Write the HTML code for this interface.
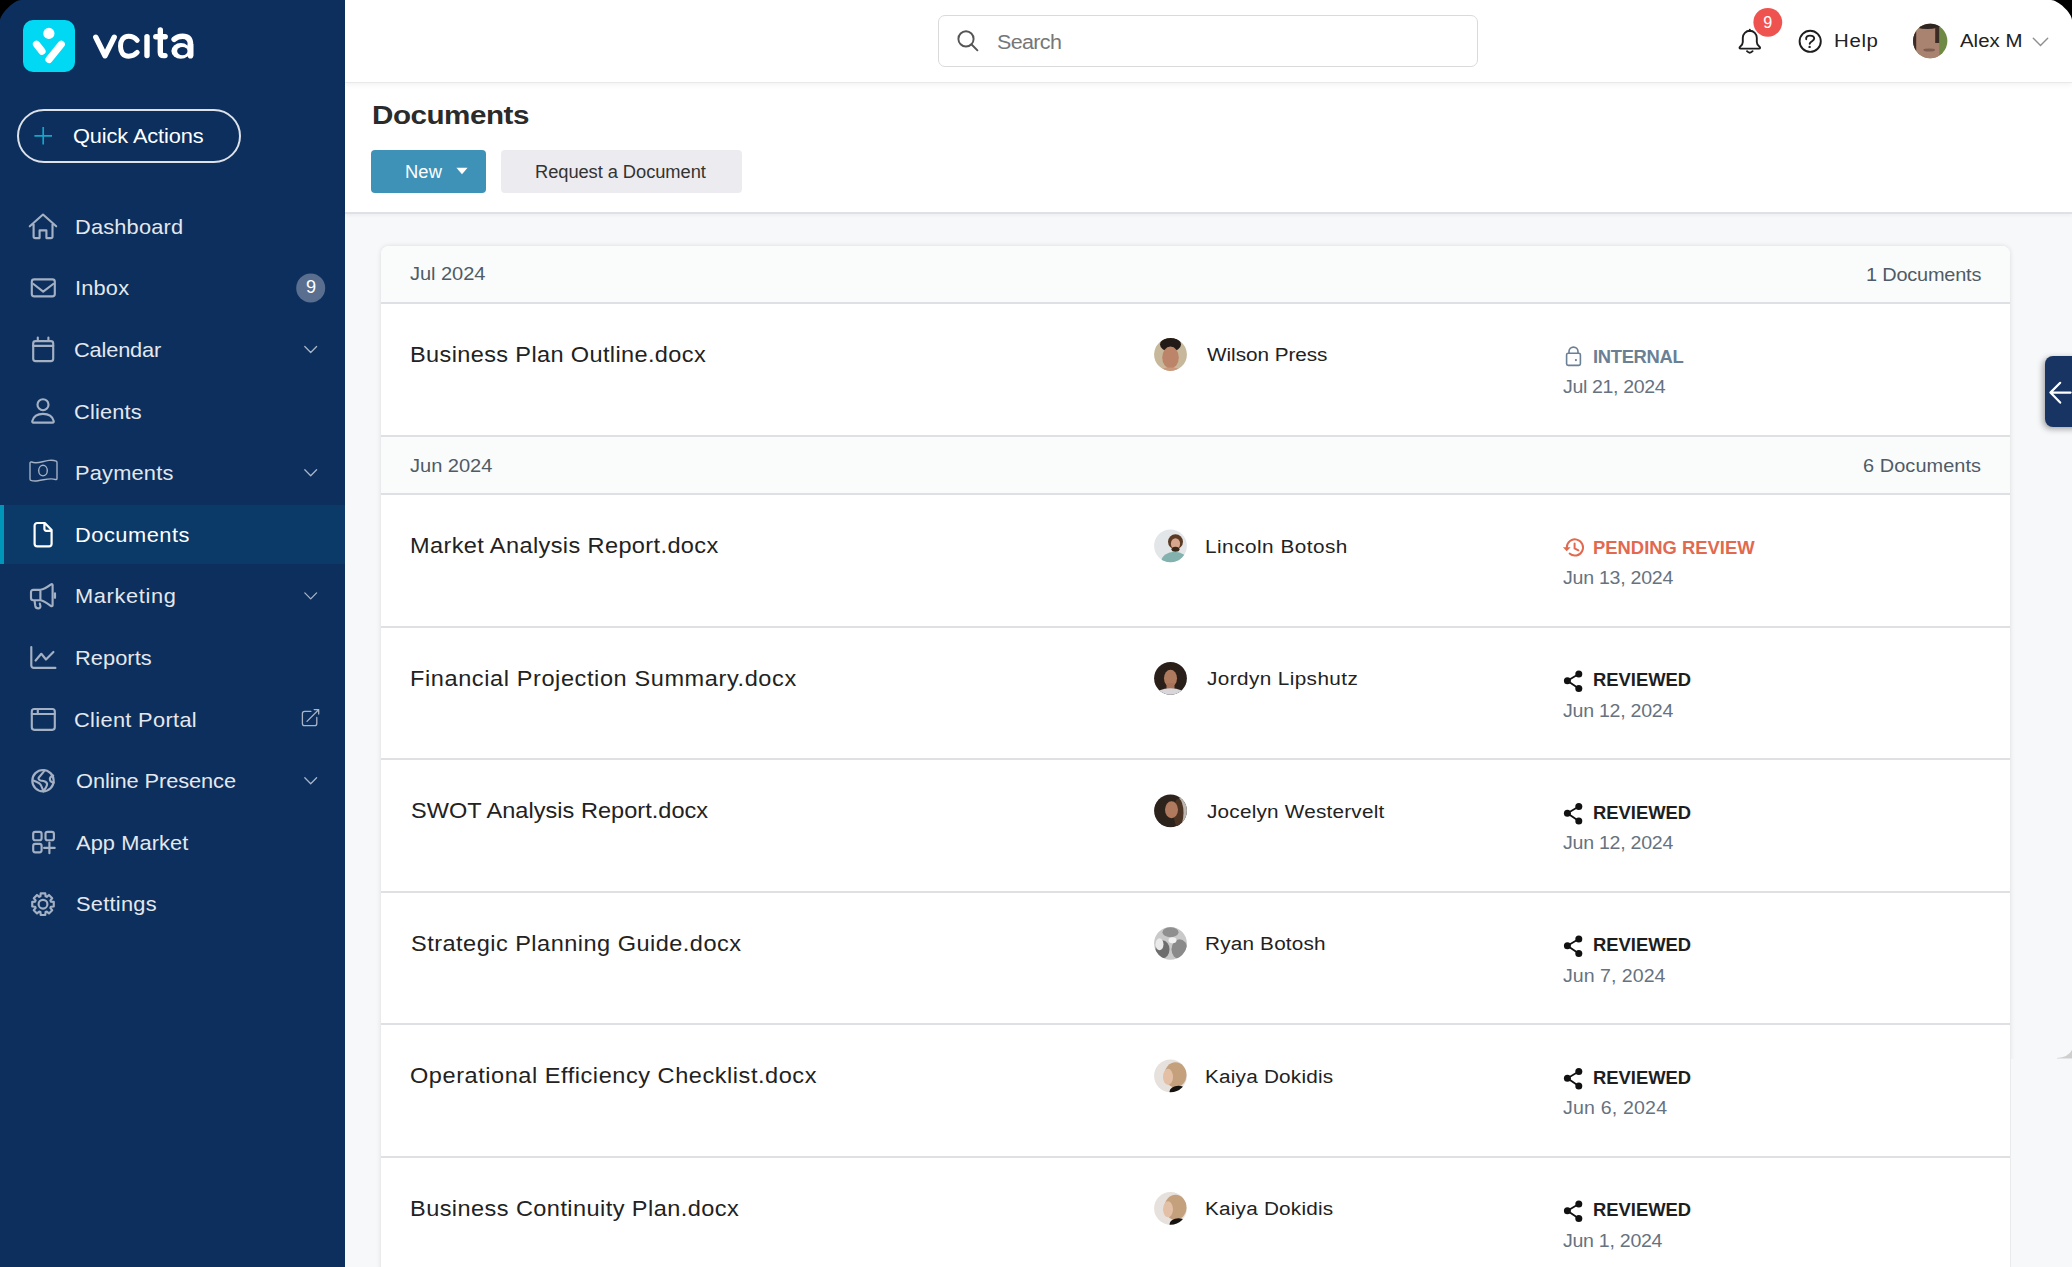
<!DOCTYPE html>
<html><head><meta charset="utf-8">
<style>
html,body{margin:0;padding:0;background:#000;}
body{width:2072px;height:1267px;overflow:hidden;position:relative;font-family:"Liberation Sans",sans-serif;}
#win{position:absolute;left:0;top:0;width:2072px;height:1267px;overflow:hidden;background:#F7F8FA;}
.abs{position:absolute;}
.t{position:absolute;white-space:nowrap;transform-origin:0 0;font-family:"Liberation Sans",sans-serif;}
#side{left:0;top:0;width:345px;height:1267px;background:#0C2F5D;}
#active{left:0;top:505px;width:345px;height:59px;background:#0B3A68;}
#activebar{left:0;top:505px;width:4px;height:59px;background:#0096B9;}
#qa{left:17px;top:109px;width:219.5px;height:49.5px;border:2px solid #DDE1E8;border-radius:27px;}
#top{left:345px;top:0;width:1727px;height:82px;background:#fff;box-shadow:0 1px 0 #E9E9E9,0 3px 5px rgba(0,0,0,0.05);z-index:3;}
#phead{left:345px;top:82px;width:1727px;height:130px;background:#fff;box-shadow:0 2px 0 #E0E1E4,0 3px 4px rgba(0,0,0,0.06);z-index:2;}
#search{left:938px;top:15px;width:538px;height:50px;border:1.5px solid #DADADA;border-radius:7px;background:#fff;}
#btnnew{left:371px;top:150px;width:115px;height:43px;background:#3E92B7;border-radius:4px;}
#btnreq{left:501px;top:150px;width:241px;height:43px;background:#ECEBF0;border-radius:4px;}
#card{left:381px;top:246px;width:1629px;height:1100px;background:#fff;border-radius:8px 8px 0 0;box-shadow:0 0 5px rgba(0,0,0,0.12);}
.gh{position:absolute;left:381px;width:1629px;background:#FAFBFB;}
.bl{position:absolute;left:381px;width:1629px;height:2px;background:#DFE0E4;}
#tab{left:2045px;top:356px;width:40px;height:71px;background:#183462;border-radius:8px;box-shadow:-2px 2px 6px rgba(0,0,0,0.35);}
.av{position:absolute;width:33px;height:33px;border-radius:50%;overflow:hidden;}
</style></head><body><div id="win">
<div id="side" class="abs"></div>
<div id="active" class="abs"></div>
<div id="activebar" class="abs"></div>
<div id="qa" class="abs"></div>
<div id="top" class="abs"></div>
<div id="phead" class="abs"></div>
<div id="search" class="abs" style="z-index:4"></div>
<div id="btnnew" class="abs" style="z-index:4"></div>
<div id="btnreq" class="abs" style="z-index:4"></div>
<div id="card" class="abs"></div>
<div class="gh" style="top:246px;height:56px;border-radius:8px 8px 0 0"></div>
<div class="bl" style="top:302px"></div>
<div class="bl" style="top:434.5px"></div>
<div class="gh" style="top:436.5px;height:56.5px"></div>
<div class="bl" style="top:493px"></div>
<div class="bl" style="top:625.5px"></div>
<div class="bl" style="top:758px"></div>
<div class="bl" style="top:890.5px"></div>
<div class="bl" style="top:1023px"></div>
<div class="bl" style="top:1155.5px"></div>
<div id="tab" class="abs"></div>
<div class="abs" style="left:2011px;top:1059px;width:61px;height:208px;background:#F7F8FA;z-index:1"></div>
<svg class="abs" style="left:2050px;top:1044px;z-index:2" width="22" height="16"><path d="M7,14 Q18,13.5 22,6 V14.5 H7 Z" fill="#CFCFCF"/></svg>
<svg style="position:absolute;left:0;top:0;z-index:9" width="2072" height="1267" viewBox="0 0 2072 1267">
<!-- logo -->
<rect x="23" y="20" width="52" height="52" rx="10" fill="#01D8F4"/>
<circle cx="48.9" cy="33.4" r="5.6" fill="#fff"/>
<path d="M36.5,44.2 L42,51.2" stroke="#fff" stroke-width="7.2" stroke-linecap="round" fill="none"/>
<path d="M61.3,44.2 L49,59.5" stroke="#fff" stroke-width="7.2" stroke-linecap="round" fill="none"/>
<g stroke="#fff" stroke-width="5.4" stroke-linecap="round" stroke-linejoin="round" fill="none">
<path d="M95.8,37.2 L105,55.8 L114.2,37.2"/>
<path d="M137.2,40.3 C135,37.7 132,36.3 128.6,36.3 C123,36.3 120.5,40.8 120.5,46.3 C120.5,52 123,56.2 128.6,56.2 C132,56.2 135,54.9 137.2,52.4" stroke-width="5"/>
<path d="M147,36.6 V55.6"/>
<path d="M160.3,29.9 V52.2 Q160.3,55.6 163.6,55.6 H165"/>
<path d="M155.8,36.7 H165.2"/>
<path d="M174.2,39.3 Q177.5,36.2 182.5,36.2 Q190.5,36.2 190.5,44.5 V55.8" stroke-width="5.6"/>
</g>
<ellipse cx="180.8" cy="50.9" rx="9.4" ry="7.8" fill="#fff"/>
<ellipse cx="182.4" cy="51.1" rx="5.3" ry="4.1" fill="#0C2F5D"/>
<rect x="187.7" y="44" width="5.6" height="11.8" fill="#fff"/>
<!-- quick actions plus -->
<path d="M43.2,127 V144.6 M34.4,135.8 H52" stroke="#15A6C8" stroke-width="1.7" fill="none"/>
<!-- nav icons -->
<g stroke="#A4B0C3" stroke-width="2.15" fill="none" stroke-linecap="round" stroke-linejoin="round">
<path d="M29.8,226.3 L43,214.5 L56.2,226.3 M33.6,222.8 V236.4 a1.7,1.7 0 0 0 1.7,1.7 H39.6 V230.4 H46.4 V238.1 H50.8 a1.7,1.7 0 0 0 1.7,-1.7 V222.8"/>
<rect x="31.8" y="279.3" width="23" height="17" rx="2.4"/>
<path d="M33.4,284 L43.2,291.6 L53.2,284"/>
<rect x="33.2" y="341.1" width="20" height="20" rx="2.4"/>
<path d="M33.2,345.8 H53.2 M37.8,337.6 V341 M48.4,337.6 V341"/>
<circle cx="43" cy="404.7" r="5.5"/>
<path d="M33.4,422.6 H52.6 C53.6,422.6 53.9,421.8 53.7,421 C52.5,416.6 48.3,413.9 43,413.9 C37.7,413.9 33.5,416.6 32.3,421 C32.1,421.8 32.4,422.6 33.4,422.6 Z"/>
<g stroke-width="1.4">
<path d="M30,463 C30,462.1 30.8,461.7 31.6,462 C37,464.3 42,461.2 49,460.4 C52,460.1 54.5,460.4 56.2,461.1 C56.8,461.4 57,461.9 57,462.6 V478.5 C57,479.4 56.3,479.8 55.5,479.5 C50,477.6 45,479.8 38,480.8 C35,481.2 32.5,481 30.8,480.3 C30.3,480.1 30,479.6 30,479 Z"/>
<ellipse cx="43" cy="470.6" rx="4.3" ry="5.3"/>
</g>
<path d="M40.4,589.8 H33.2 a2.2,2.2 0 0 0 -2.2,2.2 V598 a2.2,2.2 0 0 0 2.2,2.2 H40.4 Z M40.4,589.8 C45,589 48.5,586.2 51,584.4 C51.8,583.9 52.6,584.3 52.6,585.2 V605.2 C52.6,606.1 51.8,606.5 51,606 C48.5,604.3 45,601 40.4,600.2 M55,593.2 V597.8 M34.5,600.4 L35.3,606 C35.6,607.8 36.6,608.3 38.2,608.3 C39.8,608.3 40.6,607.5 40.4,606 L39.8,603.5"/>
<path d="M31.3,647 V665.5 a2.4,2.4 0 0 0 2.4,2.4 H55.4 M35.6,660.5 L41.3,653.8 L46,659.5 L53.4,652"/>
<rect x="31.8" y="709" width="23" height="20.8" rx="2.5"/>
<path d="M31.8,714 H54.8 M37.8,709 V714"/>
<circle cx="43" cy="780.7" r="10.7"/>
<path d="M44.5,770.5 C43,773 41,775 38.8,777.5 C38,778.5 39,780 40.5,780.5 L43.5,781 C45.5,781.5 47.5,783 47,785 C46.5,787 45,789 43.5,791.3 C42.5,789 41.5,786 40.5,784.5 C39.5,783 36.5,782 33.5,780.5 M53.2,775.6 C50.8,776.3 49.6,778.3 50,780 C50.4,781.6 52,782.4 53.7,782.6"/>
<rect x="33.2" y="831.8" width="8.4" height="8.4" rx="2"/>
<rect x="45.5" y="831.8" width="8.4" height="8.4" rx="2"/>
<rect x="33.2" y="843.9" width="8.4" height="8.4" rx="2"/>
<path d="M49.4,842.6 V853.2 M44.1,847.9 H54.7"/>
<path d="M40.44,896.31 L40.71,893.44 L45.29,893.44 L45.56,896.31 L46.77,896.80 L48.99,894.97 L52.23,898.21 L50.40,900.43 L50.89,901.64 L53.76,901.91 L53.76,906.49 L50.89,906.76 L50.40,907.97 L52.23,910.19 L48.99,913.43 L46.77,911.60 L45.56,912.09 L45.29,914.96 L40.71,914.96 L40.44,912.09 L39.23,911.60 L37.01,913.43 L33.77,910.19 L35.60,907.97 L35.11,906.76 L32.24,906.49 L32.24,901.91 L35.11,901.64 L35.60,900.43 L33.77,898.21 L37.01,894.97 L39.23,896.80 Z"/>
<circle cx="43" cy="904.2" r="4.4"/>
</g>
<path d="M37.2,523 H44.8 L51.6,530 V543.7 a2.6,2.6 0 0 1 -2.6,2.6 H37.2 a2.6,2.6 0 0 1 -2.6,-2.6 V525.6 a2.6,2.6 0 0 1 2.6,-2.6 Z M44.4,523.2 V529 a1.8,1.8 0 0 0 1.8,1.8 H51.4" stroke="#fff" stroke-width="2.2" fill="none" stroke-linejoin="round"/>
<!-- chevrons -->
<g stroke="#A9B5C7" stroke-width="1.3" fill="none" stroke-linecap="round" stroke-linejoin="round">
<path d="M304.8,346.5 L310.7,352.5 L316.6,346.5"/>
<path d="M304.8,469.7 L310.7,475.7 L316.6,469.7"/>
<path d="M304.8,592.9 L310.7,598.9 L316.6,592.9"/>
<path d="M304.8,777.7 L310.7,783.7 L316.6,777.7"/>
<path d="M310.9,711.4 H304.6 a2.2,2.2 0 0 0 -2.2,2.2 V723.5 a2.2,2.2 0 0 0 2.2,2.2 H314.6 a2.2,2.2 0 0 0 2.2,-2.2 V717.5 M307,721.4 L318.6,709.7 M314.2,709.6 H318.7 V714"/>
</g>
<!-- inbox badge -->
<circle cx="310.7" cy="287.9" r="14.5" fill="#5A6F8F"/>
<!-- header icons -->
<g stroke="#555" stroke-width="1.9" fill="none" stroke-linecap="round">
<circle cx="966" cy="38.9" r="7.6"/>
<path d="M971.6,44.5 L977.4,50.3"/>
</g>
<g stroke="#1E1E1E" stroke-width="1.9" fill="none" stroke-linecap="round" stroke-linejoin="round">
<path d="M1749.8,29.6 V31 M1742.8,42 V37.8 A7,7 0 0 1 1756.8,37.8 V42 C1756.8,44 1757.8,45.5 1759.5,46.8 C1760.5,47.6 1760.2,48.6 1759,48.6 H1740.6 C1739.4,48.6 1739.1,47.6 1740.1,46.8 C1741.8,45.5 1742.8,44 1742.8,42 Z M1747,51.2 Q1749.8,54.2 1752.6,51.2"/>
<circle cx="1810.2" cy="41.3" r="10.6"/>
<path d="M1806.2,39.2 C1805.8,36.7 1807.5,35.6 1810,35.6 C1812.5,35.6 1814.2,36.7 1814.2,38.6 C1814.2,41 1810.2,41.3 1809.7,43.8"/>
</g>
<circle cx="1809.6" cy="46.9" r="1.2" fill="#1E1E1E"/>
<circle cx="1767.8" cy="22.3" r="14.4" fill="#EF5350"/>
<path d="M2033.3,38.2 L2040.5,45.4 L2047.7,38.2" stroke="#8E8E8E" stroke-width="1.4" fill="none" stroke-linecap="round"/>
<!-- New caret -->
<path d="M456.4,167.8 H467.6 L462,174.2 Z" fill="#fff"/>
<!-- side tab arrow -->
<path d="M2070.6,392.6 H2051 M2060.2,382.8 L2050.4,392.6 L2060.2,402.6" stroke="#fff" stroke-width="2.2" fill="none" stroke-linecap="round" stroke-linejoin="round"/>
<g stroke="#6B7F95" stroke-width="1.6" fill="none"><path d="M1569,353 V351.6 A4.5,4.5 0 0 1 1578,351.6 V353"/><rect x="1566.6" y="353.2" width="13.8" height="12.2" rx="1.6"/></g><circle cx="1575.9" cy="360.1" r="1.1" fill="#6B7F95"/>
<g stroke="#E2694E" stroke-width="2" fill="none" stroke-linecap="round"><path d="M1566.8,547.4 A8.1,8.1 0 1 1 1569.6,553.6"/><path d="M1574.6,543.4 V548.3 L1578.4,550.3"/></g><path d="M1562.9,547.2 H1570.7 L1566.7,551.2 Z" fill="#E2694E"/>
<g transform="translate(0,0.0)"><path d="M1578.8,673.9 L1567.4,680.7 L1578.8,688.4" stroke="#111" stroke-width="1.8" fill="none"/><circle cx="1578.8" cy="673.9" r="3.5" fill="#111"/><circle cx="1567.4" cy="680.7" r="3.5" fill="#111"/><circle cx="1578.8" cy="688.4" r="3.5" fill="#111"/></g>
<g transform="translate(0,132.5)"><path d="M1578.8,673.9 L1567.4,680.7 L1578.8,688.4" stroke="#111" stroke-width="1.8" fill="none"/><circle cx="1578.8" cy="673.9" r="3.5" fill="#111"/><circle cx="1567.4" cy="680.7" r="3.5" fill="#111"/><circle cx="1578.8" cy="688.4" r="3.5" fill="#111"/></g>
<g transform="translate(0,265.0)"><path d="M1578.8,673.9 L1567.4,680.7 L1578.8,688.4" stroke="#111" stroke-width="1.8" fill="none"/><circle cx="1578.8" cy="673.9" r="3.5" fill="#111"/><circle cx="1567.4" cy="680.7" r="3.5" fill="#111"/><circle cx="1578.8" cy="688.4" r="3.5" fill="#111"/></g>
<g transform="translate(0,397.5)"><path d="M1578.8,673.9 L1567.4,680.7 L1578.8,688.4" stroke="#111" stroke-width="1.8" fill="none"/><circle cx="1578.8" cy="673.9" r="3.5" fill="#111"/><circle cx="1567.4" cy="680.7" r="3.5" fill="#111"/><circle cx="1578.8" cy="688.4" r="3.5" fill="#111"/></g>
<g transform="translate(0,530.0)"><path d="M1578.8,673.9 L1567.4,680.7 L1578.8,688.4" stroke="#111" stroke-width="1.8" fill="none"/><circle cx="1578.8" cy="673.9" r="3.5" fill="#111"/><circle cx="1567.4" cy="680.7" r="3.5" fill="#111"/><circle cx="1578.8" cy="688.4" r="3.5" fill="#111"/></g>
<defs><clipPath id="avc"><circle r="16.4"/></clipPath><clipPath id="avh"><circle r="17.2"/></clipPath></defs>
<g transform="translate(1170.5,354.5)"><g clip-path="url(#avc)"><circle r="17" fill="#C8B89B"/><ellipse cx="0" cy="-10" rx="10.5" ry="7" fill="#221B17"/><ellipse cx="0" cy="3" rx="8.3" ry="11" fill="#BC8569"/><ellipse cx="0" cy="18" rx="13" ry="5" fill="#C99A7E"/></g></g>
<g transform="translate(1170.5,545.8)"><g clip-path="url(#avc)"><circle r="17" fill="#E3E6E9"/><ellipse cx="4" cy="15" rx="13" ry="9" fill="#83B1AE"/><circle cx="5" cy="-4" r="7.5" fill="#5B3B24"/><ellipse cx="5" cy="-2" rx="4.6" ry="5.6" fill="#D7A68C"/><ellipse cx="5" cy="3.5" rx="4" ry="2.5" fill="#3A2818"/></g></g>
<g transform="translate(1170.5,678.3)"><g clip-path="url(#avc)"><circle r="17" fill="#2B2019"/><ellipse cx="0" cy="0" rx="6.5" ry="8.5" fill="#B07A5F"/><rect x="-4" y="5" width="8" height="8" fill="#A9735A"/><ellipse cx="0" cy="17" rx="15" ry="7" fill="#D8D5DB"/></g></g>
<g transform="translate(1170.5,810.8)"><g clip-path="url(#avc)"><circle r="17" fill="#2C231D"/><rect x="9" y="-17" width="10" height="34" fill="#BDB6AF"/><ellipse cx="8" cy="2" rx="5" ry="14" fill="#4A3322"/><ellipse cx="1" cy="-1" rx="6.5" ry="8.5" fill="#B07A5E"/></g></g>
<g transform="translate(1170.5,943.3)"><g clip-path="url(#avc)"><circle r="17" fill="#C9C9C9"/><ellipse cx="-8" cy="6" rx="7" ry="9" fill="#6E6E6E"/><ellipse cx="-11" cy="1" rx="4" ry="6" fill="#EAEAEA"/><ellipse cx="9" cy="6" rx="8" ry="10" fill="#8A8A8A"/><ellipse cx="0" cy="-11" rx="8" ry="5" fill="#8F8F8F"/><ellipse cx="2" cy="-3" rx="4" ry="3" fill="#F2F2F2"/></g></g>
<g transform="translate(1170.5,1075.8)"><g clip-path="url(#avc)"><circle r="17" fill="#E6E1DD"/><ellipse cx="5" cy="-1" rx="11" ry="12.5" fill="#C4A07C"/><ellipse cx="-2.5" cy="1" rx="5" ry="8" fill="#E3BFA6"/><ellipse cx="8" cy="16" rx="9" ry="6" fill="#151210"/></g></g>
<g transform="translate(1170.5,1208.3)"><g clip-path="url(#avc)"><circle r="17" fill="#E6E1DD"/><ellipse cx="5" cy="-1" rx="11" ry="12.5" fill="#C4A07C"/><ellipse cx="-2.5" cy="1" rx="5" ry="8" fill="#E3BFA6"/><ellipse cx="8" cy="16" rx="9" ry="6" fill="#151210"/></g></g>
<g transform="translate(1930.2,41)"><g clip-path="url(#avh)"><circle r="18" fill="#6F8A44"/><rect x="-18" y="-18" width="27" height="36" fill="#A9836F"/><ellipse cx="-3" cy="-16.5" rx="14" ry="4.5" fill="#2E2420"/><rect x="-18" y="-18" width="4" height="30" fill="#3A2C24"/><rect x="5" y="-14" width="4" height="16" fill="#3A2C24"/><ellipse cx="-1" cy="9" rx="6" ry="1.6" fill="#7E5E52"/></g></g>
</svg>

<svg class="abs" style="left:0;top:0;z-index:20" width="2072" height="24"><path d="M0,0 H21 C14,0 0,14 0,21 Z" fill="#000"/><path d="M2072,0 H2051 C2058,0 2072,13 2072,20 Z" fill="#000"/></svg>
<div style="position:absolute;left:0;top:0;z-index:10">
<div class="t" style="left:74.82px;top:216.70px;font-size:20.2px;line-height:20.2px;letter-spacing:0.167px;color:#E4E8EE;font-weight:400;transform:scaleX(1.08)">Dashboard</div>
<div class="t" style="left:74.82px;top:278.30px;font-size:20.2px;line-height:20.2px;letter-spacing:0.173px;color:#E4E8EE;font-weight:400;transform:scaleX(1.08)">Inbox</div>
<div class="t" style="left:74.42px;top:339.90px;font-size:20.2px;line-height:20.2px;letter-spacing:-0.158px;color:#E4E8EE;font-weight:400;transform:scaleX(1.08)">Calendar</div>
<div class="t" style="left:74.42px;top:401.50px;font-size:20.2px;line-height:20.2px;letter-spacing:0.160px;color:#E4E8EE;font-weight:400;transform:scaleX(1.08)">Clients</div>
<div class="t" style="left:74.82px;top:463.10px;font-size:20.2px;line-height:20.2px;letter-spacing:0.177px;color:#E4E8EE;font-weight:400;transform:scaleX(1.08)">Payments</div>
<div class="t" style="left:74.82px;top:524.70px;font-size:20.2px;line-height:20.2px;letter-spacing:0.488px;color:#FFFFFF;font-weight:400;transform:scaleX(1.08)">Documents</div>
<div class="t" style="left:74.82px;top:586.30px;font-size:20.2px;line-height:20.2px;letter-spacing:0.599px;color:#E4E8EE;font-weight:400;transform:scaleX(1.08)">Marketing</div>
<div class="t" style="left:74.82px;top:647.90px;font-size:20.2px;line-height:20.2px;letter-spacing:0.053px;color:#E4E8EE;font-weight:400;transform:scaleX(1.08)">Reports</div>
<div class="t" style="left:74.42px;top:709.50px;font-size:20.2px;line-height:20.2px;letter-spacing:0.305px;color:#E4E8EE;font-weight:400;transform:scaleX(1.08)">Client Portal</div>
<div class="t" style="left:75.50px;top:771.10px;font-size:20.2px;line-height:20.2px;letter-spacing:-0.076px;color:#E4E8EE;font-weight:400;transform:scaleX(1.08)">Online Presence</div>
<div class="t" style="left:75.50px;top:832.70px;font-size:20.2px;line-height:20.2px;letter-spacing:0.092px;color:#E4E8EE;font-weight:400;transform:scaleX(1.08)">App Market</div>
<div class="t" style="left:75.50px;top:894.30px;font-size:20.2px;line-height:20.2px;letter-spacing:0.241px;color:#E4E8EE;font-weight:400;transform:scaleX(1.08)">Settings</div>
<div class="t" style="left:72.50px;top:126.10px;font-size:20.2px;line-height:20.2px;letter-spacing:-0.107px;color:#FFFFFF;font-weight:400;transform:scaleX(1.08)">Quick Actions</div>
<div class="t" style="left:306.00px;top:278.10px;font-size:18.17px;line-height:18.17px;letter-spacing:0.000px;color:#FFFFFF;font-weight:400">9</div>
<div class="t" style="left:1763.30px;top:13.50px;font-size:16.13px;line-height:16.13px;letter-spacing:0.000px;color:#FFFFFF;font-weight:400">9</div>
<div class="t" style="left:996.60px;top:32.90px;font-size:19.91px;line-height:19.91px;letter-spacing:-0.604px;color:#777777;font-weight:400;transform:scaleX(1.08)">Search</div>
<div class="t" style="left:1833.62px;top:31.90px;font-size:18.9px;line-height:18.9px;letter-spacing:0.607px;color:#222222;font-weight:400;transform:scaleX(1.08)">Help</div>
<div class="t" style="left:1960.00px;top:31.90px;font-size:18.9px;line-height:18.9px;letter-spacing:0.008px;color:#222222;font-weight:400;transform:scaleX(1.08)">Alex M</div>
<div class="t" style="left:372.18px;top:102.30px;font-size:26.45px;line-height:26.45px;letter-spacing:-0.427px;color:#2B2B2B;font-weight:700;transform:scaleX(1.12)">Documents</div>
<div class="t" style="left:405.43px;top:163.10px;font-size:18.9px;line-height:18.9px;letter-spacing:0.137px;color:#FFFFFF;font-weight:400;transform:scaleX(0.97)">New</div>
<div class="t" style="left:535.33px;top:163.10px;font-size:18.9px;line-height:18.9px;letter-spacing:-0.079px;color:#333333;font-weight:400;transform:scaleX(0.97)">Request a Document</div>
<div class="t" style="left:410.00px;top:265.00px;font-size:18.6px;line-height:18.6px;letter-spacing:-0.060px;color:#4F5B67;font-weight:400;transform:scaleX(1.08)">Jul 2024</div>
<div class="t" style="left:1865.92px;top:265.80px;font-size:18.46px;line-height:18.46px;letter-spacing:-0.176px;color:#4F5B67;font-weight:400;transform:scaleX(1.08)">1 Documents</div>
<div class="t" style="left:410.20px;top:456.80px;font-size:18.6px;line-height:18.6px;letter-spacing:-0.035px;color:#4F5B67;font-weight:400;transform:scaleX(1.08)">Jun 2024</div>
<div class="t" style="left:1863.20px;top:457.20px;font-size:18.46px;line-height:18.46px;letter-spacing:0.067px;color:#4F5B67;font-weight:400;transform:scaleX(1.08)">6 Documents</div>
<div class="t" style="left:410.32px;top:343.70px;font-size:21.8px;line-height:21.8px;letter-spacing:0.337px;color:#222222;font-weight:400;transform:scaleX(1.08)">Business Plan Outline.docx</div>
<div class="t" style="left:1206.50px;top:345.40px;font-size:19.19px;line-height:19.19px;letter-spacing:-0.039px;color:#222222;font-weight:400;transform:scaleX(1.08)">Wilson Press</div>
<div class="t" style="left:1592.97px;top:348.60px;font-size:17.88px;line-height:17.88px;letter-spacing:-0.313px;color:#6B7F95;font-weight:700;transform:scaleX(1.03)">INTERNAL</div>
<div class="t" style="left:1563.00px;top:377.00px;font-size:19.19px;line-height:19.19px;letter-spacing:-0.354px;color:#66727F;font-weight:400;transform:scaleX(1.02)">Jul 21, 2024</div>
<div class="t" style="left:410.32px;top:535.00px;font-size:21.8px;line-height:21.8px;letter-spacing:0.355px;color:#222222;font-weight:400;transform:scaleX(1.08)">Market Analysis Report.docx</div>
<div class="t" style="left:1205.42px;top:536.70px;font-size:19.19px;line-height:19.19px;letter-spacing:0.460px;color:#222222;font-weight:400;transform:scaleX(1.08)">Lincoln Botosh</div>
<div class="t" style="left:1592.97px;top:539.90px;font-size:17.88px;line-height:17.88px;letter-spacing:0.007px;color:#E2694E;font-weight:700;transform:scaleX(1.03)">PENDING REVIEW</div>
<div class="t" style="left:1563.00px;top:568.30px;font-size:19.19px;line-height:19.19px;letter-spacing:-0.250px;color:#66727F;font-weight:400;transform:scaleX(1.02)">Jun 13, 2024</div>
<div class="t" style="left:410.32px;top:667.50px;font-size:21.8px;line-height:21.8px;letter-spacing:0.549px;color:#222222;font-weight:400;transform:scaleX(1.08)">Financial Projection Summary.docx</div>
<div class="t" style="left:1206.50px;top:669.20px;font-size:19.19px;line-height:19.19px;letter-spacing:0.371px;color:#222222;font-weight:400;transform:scaleX(1.08)">Jordyn Lipshutz</div>
<div class="t" style="left:1592.97px;top:672.40px;font-size:17.88px;line-height:17.88px;letter-spacing:-0.013px;color:#1E1E1E;font-weight:700;transform:scaleX(1.03)">REVIEWED</div>
<div class="t" style="left:1563.00px;top:700.80px;font-size:19.19px;line-height:19.19px;letter-spacing:-0.259px;color:#66727F;font-weight:400;transform:scaleX(1.02)">Jun 12, 2024</div>
<div class="t" style="left:411.40px;top:800.00px;font-size:21.8px;line-height:21.8px;letter-spacing:0.020px;color:#222222;font-weight:400;transform:scaleX(1.08)">SWOT Analysis Report.docx</div>
<div class="t" style="left:1206.50px;top:801.70px;font-size:19.19px;line-height:19.19px;letter-spacing:0.205px;color:#222222;font-weight:400;transform:scaleX(1.08)">Jocelyn Westervelt</div>
<div class="t" style="left:1592.97px;top:804.90px;font-size:17.88px;line-height:17.88px;letter-spacing:-0.013px;color:#1E1E1E;font-weight:700;transform:scaleX(1.03)">REVIEWED</div>
<div class="t" style="left:1563.00px;top:833.30px;font-size:19.19px;line-height:19.19px;letter-spacing:-0.259px;color:#66727F;font-weight:400;transform:scaleX(1.02)">Jun 12, 2024</div>
<div class="t" style="left:411.40px;top:932.50px;font-size:21.8px;line-height:21.8px;letter-spacing:0.440px;color:#222222;font-weight:400;transform:scaleX(1.08)">Strategic Planning Guide.docx</div>
<div class="t" style="left:1205.42px;top:934.20px;font-size:19.19px;line-height:19.19px;letter-spacing:0.181px;color:#222222;font-weight:400;transform:scaleX(1.08)">Ryan Botosh</div>
<div class="t" style="left:1592.97px;top:937.40px;font-size:17.88px;line-height:17.88px;letter-spacing:-0.013px;color:#1E1E1E;font-weight:700;transform:scaleX(1.03)">REVIEWED</div>
<div class="t" style="left:1563.00px;top:965.80px;font-size:19.19px;line-height:19.19px;letter-spacing:0.017px;color:#66727F;font-weight:400;transform:scaleX(1.02)">Jun 7, 2024</div>
<div class="t" style="left:410.32px;top:1065.00px;font-size:21.8px;line-height:21.8px;letter-spacing:0.504px;color:#222222;font-weight:400;transform:scaleX(1.08)">Operational Efficiency Checklist.docx</div>
<div class="t" style="left:1205.42px;top:1066.70px;font-size:19.19px;line-height:19.19px;letter-spacing:0.207px;color:#222222;font-weight:400;transform:scaleX(1.08)">Kaiya Dokidis</div>
<div class="t" style="left:1592.97px;top:1069.90px;font-size:17.88px;line-height:17.88px;letter-spacing:-0.013px;color:#1E1E1E;font-weight:700;transform:scaleX(1.03)">REVIEWED</div>
<div class="t" style="left:1563.00px;top:1098.30px;font-size:19.19px;line-height:19.19px;letter-spacing:0.174px;color:#66727F;font-weight:400;transform:scaleX(1.02)">Jun 6, 2024</div>
<div class="t" style="left:410.32px;top:1197.50px;font-size:21.8px;line-height:21.8px;letter-spacing:0.397px;color:#222222;font-weight:400;transform:scaleX(1.08)">Business Continuity Plan.docx</div>
<div class="t" style="left:1205.42px;top:1199.20px;font-size:19.19px;line-height:19.19px;letter-spacing:0.207px;color:#222222;font-weight:400;transform:scaleX(1.08)">Kaiya Dokidis</div>
<div class="t" style="left:1592.97px;top:1202.40px;font-size:17.88px;line-height:17.88px;letter-spacing:-0.013px;color:#1E1E1E;font-weight:700;transform:scaleX(1.03)">REVIEWED</div>
<div class="t" style="left:1563.00px;top:1230.80px;font-size:19.19px;line-height:19.19px;letter-spacing:-0.277px;color:#66727F;font-weight:400;transform:scaleX(1.02)">Jun 1, 2024</div>
</div>
</div></body></html>
